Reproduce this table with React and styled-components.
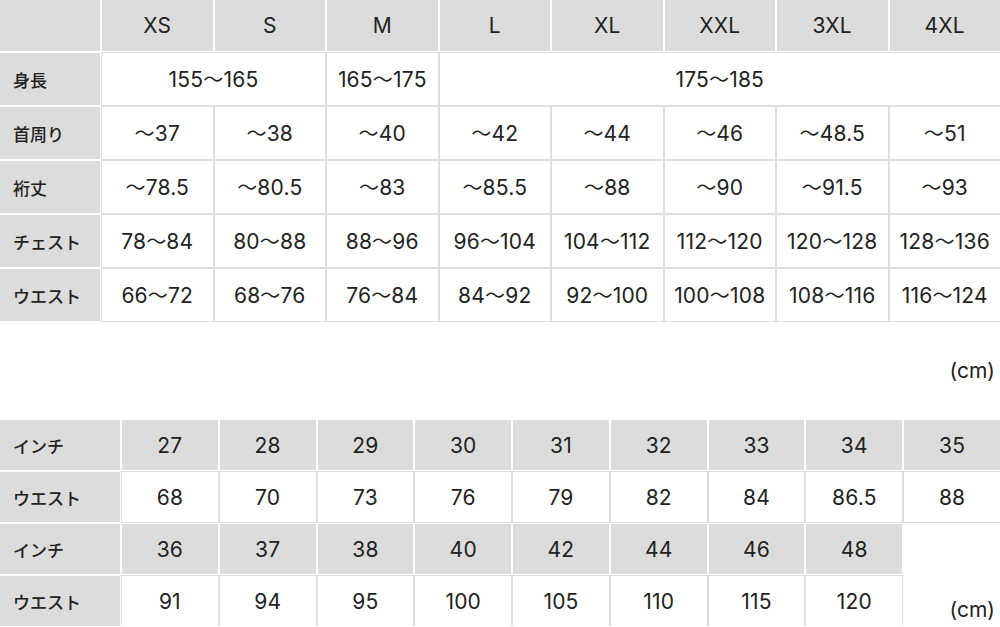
import styled, { createGlobalStyle, css } from 'styled-components';

const GlobalStyle = createGlobalStyle`
  html, body {
    margin: 0;
    padding: 0;
    background: #fff;
  }
  body {
    font-family: Inter, "Noto Sans CJK JP", sans-serif;
    color: #222;
  }
`;

const Page = styled.div`
  width: 1000px;
  display: flex;
  flex-direction: column;
`;

const Grid = styled.div`
  display: grid;
  grid-template-columns: ${props => props.label}px repeat(${props => props.cols}, 1fr);
  grid-template-rows: ${props => props.firstRow ? `${props.firstRow}px` : 'none'};
  grid-auto-rows: ${props => props.rowHeight}px;
  gap: 2px;
  background: #fff;
`;

const Cell = styled.div`
  display: flex;
  align-items: center;
  justify-content: center;
  font-size: 21px;
  line-height: 1;
  letter-spacing: 0.2px;
  white-space: nowrap;
  background: #fff;
  box-shadow: 0 0 0 1px #dedede;
  grid-column: span ${props => props.span || 1};
  ${props =>
    props.gray &&
    css`
      background: #dcdcdc;
      box-shadow: none;
    `};
`;

const Tilde = styled.span`
  font-family: "Noto Sans CJK JP", sans-serif;
  font-size: 20px;
`;

const Label = styled.div`
  display: flex;
  align-items: center;
  padding-left: 13px;
  font-family: "Noto Sans CJK JP", sans-serif;
  font-size: 17px;
  font-weight: 500;
  background: #dcdcdc;
  white-space: nowrap;
`;

const Unit = styled.div`
  display: flex;
  justify-content: flex-end;
  align-items: center;
  padding-right: 5px;
  font-size: 21px;
  height: ${props => props.h}px;
`;

const UnitCell = styled.div`
  grid-row: span 2;
  display: flex;
  align-items: flex-end;
  justify-content: flex-end;
  padding: 0 5px 4px 0;
  font-size: 21px;
`;

const sizes = ['XS', 'S', 'M', 'L', 'XL', 'XXL', '3XL', '4XL'];

const topRows = [
  { label: '首周り', values: ['〜37', '〜38', '〜40', '〜42', '〜44', '〜46', '〜48.5', '〜51'] },
  { label: '裄丈', values: ['〜78.5', '〜80.5', '〜83', '〜85.5', '〜88', '〜90', '〜91.5', '〜93'] },
  { label: 'チェスト', values: ['78〜84', '80〜88', '88〜96', '96〜104', '104〜112', '112〜120', '120〜128', '128〜136'] },
  { label: 'ウエスト', values: ['66〜72', '68〜76', '76〜84', '84〜92', '92〜100', '100〜108', '108〜116', '116〜124'] },
];

const inch1 = ['27', '28', '29', '30', '31', '32', '33', '34', '35'];
const waist1 = ['68', '70', '73', '76', '79', '82', '84', '86.5', '88'];
const inch2 = ['36', '37', '38', '40', '42', '44', '46', '48'];
const waist2 = ['91', '94', '95', '100', '105', '110', '115', '120'];

// split a range like "78〜84" so the wave dash gets the CJK font
const Range = ({ text }) => {
  const parts = text.split('〜');
  return parts.map((p, i) => (
    <span key={i}>
      {i > 0 && <Tilde>〜</Tilde>}
      {p}
    </span>
  ));
};

function App() {
  return (
    <Page>
      <GlobalStyle />
      <Grid label={100} cols={8} firstRow={51} rowHeight={52}>
        <Label />
        {sizes.map(s => (
          <Cell gray key={s}>{s}</Cell>
        ))}

        <Label>身長</Label>
        <Cell span={2}><Range text="155〜165" /></Cell>
        <Cell><Range text="165〜175" /></Cell>
        <Cell span={5}><Range text="175〜185" /></Cell>

        {topRows.map(row => [
          <Label key={row.label}>{row.label}</Label>,
          ...row.values.map((v, i) => (
            <Cell key={row.label + i}><Range text={v} /></Cell>
          )),
        ])}
      </Grid>

      <Unit h={99}>(cm)</Unit>

      <Grid label={120} cols={9} rowHeight={50}>
        <Label>インチ</Label>
        {inch1.map(v => (
          <Cell gray key={'i' + v}>{v}</Cell>
        ))}
        <Label>ウエスト</Label>
        {waist1.map(v => (
          <Cell key={'w' + v}>{v}</Cell>
        ))}
        <Label>インチ</Label>
        {inch2.map(v => (
          <Cell gray key={'j' + v}>{v}</Cell>
        ))}
        <UnitCell>(cm)</UnitCell>
        <Label>ウエスト</Label>
        {waist2.map(v => (
          <Cell key={'x' + v}>{v}</Cell>
        ))}
      </Grid>
    </Page>
  );
}

export default App;
